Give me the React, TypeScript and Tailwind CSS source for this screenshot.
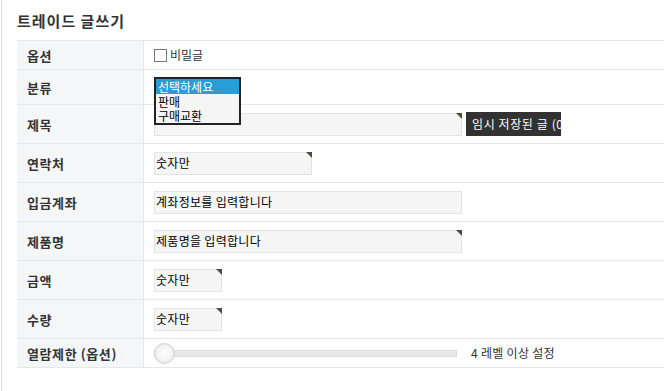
import React from "react";

const FONT = { fontFamily: '"Noto Sans CJK KR", "Noto Sans", sans-serif' };

function Corner() {
  return (
    <span className="absolute -top-px -right-px w-0 h-0 border-t-[6px] border-l-[6px] border-l-transparent border-t-[#4a4e3e]" />
  );
}

function Field({ w, text, corner }: { w: string; text?: string; corner?: boolean }) {
  return (
    <div
      className={`relative h-[23px] ${w} border border-[#e3e5e5] bg-[#f5f5f5] flex items-center pl-px text-[12px] text-black leading-none tracking-[0.3px]`}
    >
      {text}
      {corner && <Corner />}
    </div>
  );
}

function Row({
  label,
  h,
  children,
  rel,
}: {
  label: string;
  h: string;
  children?: React.ReactNode;
  rel?: boolean;
}) {
  return (
    <div className={`flex ${h} border-b border-[#e5e8ea]`}>
      <div className="w-[127px] shrink-0 border-r border-[#e5e8ea] bg-[#f4f6f7] flex items-center pl-[10px] text-[13px] font-bold text-[#333] leading-none tracking-[0.6px]">
        {label}
      </div>
      <div className={`flex-1 flex items-center pl-[10px] ${rel ? "relative" : ""}`}>{children}</div>
    </div>
  );
}

export default function App() {
  return (
    <div className="w-[664px] h-[391px] bg-white flex overflow-hidden" style={FONT}>
      <div className="ml-px w-px h-full bg-[#dedede] shrink-0" />
      <div className="flex-1 pl-[15px] flex flex-col">
        <div className="h-[40px] pt-[11px] text-[15px] font-bold text-[#333] leading-[20px] tracking-[1px]">
          트레이드 글쓰기
        </div>
        <div className="border-t border-[#e5e8ea]">
          <Row label="옵션" h="h-[29px]">
            <div className="flex items-center gap-[3px]">
              <span className="w-[13px] h-[13px] border border-[#777] bg-white" />
              <span className="text-[12px] text-[#333] leading-none">비밀글</span>
            </div>
          </Row>
          <Row label="분류" h="h-[35px]" rel>
            <div className="absolute top-[7px] left-[10px] w-[87px] h-[48px] border-2 border-[#222] bg-[#f5f5f5] text-[12px] text-black z-10 flex flex-col">
              <div className="h-[15px] leading-[15px] bg-[#279ed8] text-white pl-[2px]">선택하세요</div>
              <div className="h-[15px] leading-[15px] pl-[2px]">판매</div>
              <div className="h-[14px] leading-[14px] pl-[2px]">구매교환</div>
            </div>
          </Row>
          <Row label="제목" h="h-[39px]">
            <Field w="w-[308px]" corner />
            <div className="ml-[4px] h-[24px] w-[95px] bg-[#323232] text-white text-[12px] leading-[24px] pl-[6px] tracking-[0.6px] whitespace-nowrap overflow-hidden">
              임시 저장된 글 (0)
            </div>
          </Row>
          <Row label="연락처" h="h-[39px]">
            <Field w="w-[158px]" text="숫자만" corner />
          </Row>
          <Row label="입금계좌" h="h-[39px]">
            <Field w="w-[308px]" text="계좌정보를 입력합니다" />
          </Row>
          <Row label="제품명" h="h-[39px]">
            <Field w="w-[308px]" text="제품명을 입력합니다" corner />
          </Row>
          <Row label="금액" h="h-[39px]">
            <Field w="w-[68px]" text="숫자만" corner />
          </Row>
          <Row label="수량" h="h-[39px]">
            <Field w="w-[68px]" text="숫자만" corner />
          </Row>
          <Row label="열람제한 (옵션)" h="h-[29px]">
            <div className="relative w-[303px] h-[21px] flex items-center">
              <div className="w-full h-[7px] bg-[#e8e8e8] border border-[#dcdcdc]" />
              <span
                className="absolute left-0 top-0 w-[21px] h-[21px] rounded-full border border-[#cfcfcf]"
                style={{ background: "radial-gradient(circle at 50% 50%, #ffffff 0%, #f3f3f3 55%, #dcdcdc 100%)" }}
              />
            </div>
            <span className="ml-[14px] text-[12px] text-[#333] leading-none tracking-[0.3px]">4 레벨 이상 설정</span>
          </Row>
        </div>
      </div>
    </div>
  );
}
